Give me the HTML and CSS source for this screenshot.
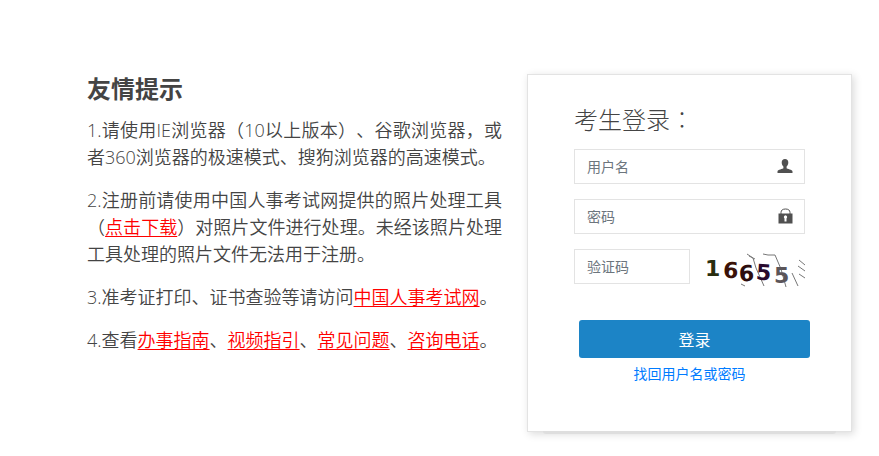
FILE: index.html
```html
<!DOCTYPE html>
<html lang="zh-CN">
<head>
    <meta charset="utf-8">
    <meta name="viewport" content="width=device-width, initial-scale=1">
    <title>考生登录</title>
    <link rel="stylesheet" href="styles.css">
</head>
<body>
    <div class="container">
        <div class="tips">
            <h2>友情提示</h2>
            <p>1.请使用IE浏览器（10以上版本）、谷歌浏览器，或者360浏览器的极速模式、搜狗浏览器的高速模式。</p>
            <p>2.注册前请使用中国人事考试网提供的照片处理工具（<a href="#">点击下载</a>）对照片文件进行处理。未经该照片处理工具处理的照片文件无法用于注册。</p>
            <p>3.准考证打印、证书查验等请访问<a href="#">中国人事考试网</a>。</p>
            <p>4.查看<a href="#">办事指南</a>、<a href="#">视频指引</a>、<a href="#">常见问题</a>、<a href="#">咨询电话</a>。</p>
        </div>
        <form class="login">
            <h3>考生登录<span class="colon" lang="zh-TW">：</span></h3>
            <div class="field">
                <input type="text" id="username" placeholder="用户名" aria-label="用户名">
                <svg class="icon" viewBox="0 0 16 16" aria-hidden="true">
                    <path d="M8 1C10.100 1 11.300 2.400 11.300 4.600C11.300 6.300 10.600 7.700 9.600 8.500V10.300C10 11 15.500 11.500 15.500 13.600V15H.5V13.600C.5 11.500 6 11 6.400 10.300V8.500C5.400 7.700 4.700 6.300 4.700 4.600C4.700 2.400 5.900 1 8 1Z"/>
                </svg>
            </div>
            <div class="field">
                <input type="password" id="password" placeholder="密码" aria-label="密码">
                <svg class="icon" viewBox="0 0 16 16" aria-hidden="true">
                    <path class="shackle" d="M4 6V4.500C4 2.200 5.700 1 8.500 1S13 2.200 13 4.500V6"/>
                    <path fill-rule="evenodd" d="M1.500 5.500H15.500V15.500H1.500ZM8.500 7.200A1.900 1.900 0 0 0 7.500 10.500V13.500H9.500V10.500A1.900 1.900 0 0 0 8.500 7.200Z"/>
                </svg>
            </div>
            <div class="code-row">
                <input type="text" id="code" placeholder="验证码" aria-label="验证码">
                <svg class="captcha" viewBox="0 0 100 40" role="img" aria-label="16655">
                    <g class="noise">
                        <path d="M42 5l6 4 3 10 8 18M44 7l6 3M58 5l5 1h7l6 14 5 18M87 24l6 13M94 11l6 5M93 17l7 5M94 25l6 4M36 35l4 2"/>
                    </g>
                    <text x="0" y="27" fill="#292e10">1</text>
                    <text x="18" y="29" fill="#3a1208" transform="rotate(3 25 22)">6</text>
                    <text x="34" y="32" fill="#2c0d0e" transform="rotate(-3 42 26)">6</text>
                    <text x="51" y="31" fill="#29092d" transform="rotate(4 58 24)">5</text>
                    <text x="69" y="34" fill="#5b5559">5</text>
                </svg>
            </div>
            <button type="submit" class="btn">登录</button>
            <a class="forgot" href="#">找回用户名或密码</a>
        </form>
    </div>
</body>
</html>
```
FILE: styles.css
```css
* { margin: 0; padding: 0; box-sizing: border-box; }
body { font-family: "Open Sans", "Noto Sans CJK SC", sans-serif; font-size: 14px; color: #444; background: #fff; text-spacing-trim: space-all; }
.container { display: flex; align-items: flex-start; gap: 25px; padding: 74px 27px 20px 87px; }

.tips { flex: 1; font-size: 18px; font-weight: 350; line-height: 27px; }
.tips h2 { font-size: 24px; font-weight: bold; line-height: 30px; margin-bottom: 13px; }
.tips p { margin-bottom: 16px; text-align: justify; }
.tips a { color: #f00; text-decoration: underline; text-underline-offset: 2px; text-decoration-thickness: 1px; }

.login { position: relative; width: 325px; padding: 29px 46px 47px; background: #fff; border: 1px solid #e3e3e3; box-shadow: 2px 2px 8px rgba(0,0,0,0.15); }
.login::after { content: ""; position: absolute; left: 15px; right: 15px; bottom: -3px; height: 3px; background: #dedede; border-radius: 0 0 3px 3px; }
.login h3 { font-size: 24px; font-weight: 300; line-height: 30px; margin-bottom: 14px; }
.colon { font-family: "Noto Sans CJK TC", sans-serif; font-weight: 100; }

input { width: 100%; height: 35px; padding: 0 12px; font-family: inherit; font-size: 14px; color: #444; background: #fff; border: 1px solid #e3e3e3; outline: none; }
input::placeholder { color: #6c757d; opacity: 1; }
.field { position: relative; margin-bottom: 15px; }
.icon { position: absolute; right: 12px; top: 9px; width: 16px; height: 16px; fill: #505050; }
.shackle { fill: none; stroke: #505050; stroke-width: 1; }

.code-row { display: flex; align-items: flex-start; gap: 15px; margin-bottom: 31px; }
.code-row input { flex: 1; min-width: 0; }
.captcha { width: 100px; height: 40px; font-family: "DejaVu Sans", sans-serif; font-size: 22px; font-weight: bold; }
.noise { fill: none; stroke: #777; stroke-width: 1; }

.btn { display: block; width: 100%; height: 38px; margin-left: 5px; font-family: inherit; font-size: 16px; color: #fff; background: #1c84c6; border: none; border-radius: 3px; cursor: pointer; }
.btn:hover { background: #1a7bb9; }
.forgot { display: block; margin-top: 5px; line-height: 21px; text-align: center; color: #007bff; text-decoration: none; }
```
